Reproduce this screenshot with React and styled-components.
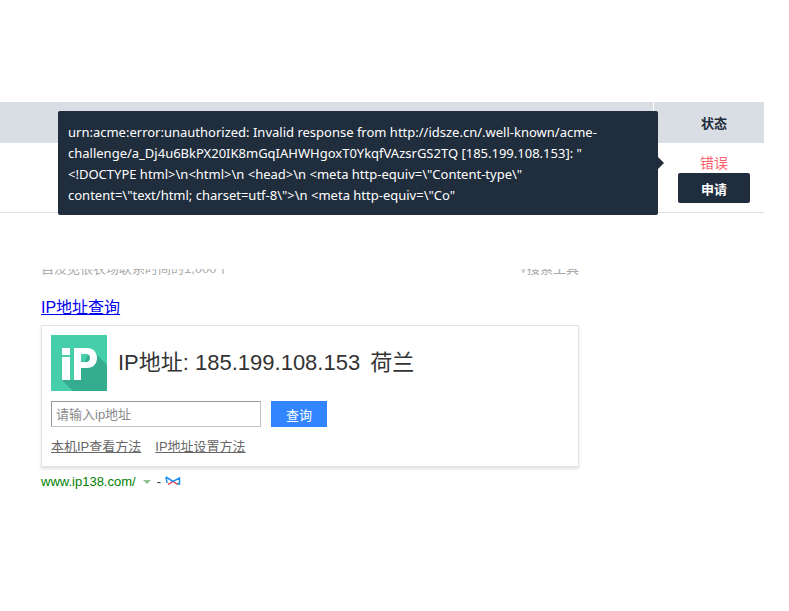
import React from 'react'
import styled, { createGlobalStyle } from 'styled-components'

const uiFont = `"Noto Sans", "Open Sans", "Noto Sans CJK SC", sans-serif`
const pageFont = `"Liberation Sans", "Noto Sans CJK SC", sans-serif`

const GlobalStyle = createGlobalStyle`
    html, body {
        margin: 0;
        padding: 0;
        background: #fff;
    }
`

const Page = styled.div`
    width: 789px;
    height: 611px;
    overflow: hidden;
    padding-top: 102px;
    box-sizing: border-box;
`

const Table = styled.div`
    position: relative;
    width: 764px;
    font-family: ${uiFont};
`

const HeadRow = styled.div`
    display: flex;
    height: 41px;
    background: #d9dde4;
`

const HeadSpacer = styled.div`
    flex: 1;
`

const HeadCell = styled.div`
    width: 111px;
    padding-left: 10px;
    box-sizing: border-box;
    border-left: 1px solid #fff;
    display: flex;
    align-items: center;
    justify-content: center;
    font-size: 13px;
    font-weight: 700;
    color: #1f2d3d;
`

const BodyRow = styled.div`
    display: flex;
    justify-content: flex-end;
    height: 69px;
    border-bottom: 1px solid #dfe1e6;
`

const StatusCell = styled.div`
    width: 110px;
    display: flex;
    flex-direction: column;
    align-items: center;
    padding: 10px 0 0 10px;
    box-sizing: border-box;
`

const ErrorText = styled.span`
    font-size: 14px;
    line-height: 19px;
    color: #ff5f6d;
`

const ApplyButton = styled.button`
    width: 72px;
    height: 30px;
    margin-top: 1px;
    padding: 0;
    border: 0;
    border-radius: 2px;
    background: #1f2d3d;
    color: #fff;
    font-family: ${uiFont};
    font-size: 13px;
    font-weight: 700;
`

const Tooltip = styled.div`
    position: absolute;
    left: 58px;
    top: 9px;
    width: 600px;
    height: 104px;
    box-sizing: border-box;
    padding: 11px 10px;
    border-radius: 2px;
    background: #1f2d3d;
    color: #fff;
    font-size: 13px;
    line-height: 21px;

    &::after {
        content: '';
        position: absolute;
        right: -6px;
        top: 46px;
        border-style: solid;
        border-width: 6px 0 6px 6px;
        border-color: transparent transparent transparent #1f2d3d;
    }
`

const TooltipLine = styled.div`
    white-space: pre;
`

const ResultSection = styled.section`
    width: 538px;
    margin: 56px 0 0 41px;
    font-family: ${pageFont};
`

const ClippedRow = styled.div`
    display: flex;
    justify-content: space-between;
    align-items: flex-end;
    height: 7px;
    overflow: hidden;
    font-size: 13px;
    line-height: 15px;
    color: #aaa;
`

const ResultTitle = styled.a`
    display: block;
    margin-top: 21px;
    font-size: 16px;
    line-height: 22px;
    color: #0000ee;
    text-decoration: underline;
`

const ResultCard = styled.div`
    width: 538px;
    height: 142px;
    margin-top: 6px;
    box-sizing: border-box;
    padding: 9px;
    border: 1px solid #e3e3e3;
    box-shadow: 0 2px 3px rgba(0, 0, 0, 0.12);
`

const IpHead = styled.div`
    display: flex;
    align-items: center;
    gap: 11px;
`

const LogoBox = styled.svg`
    width: 56px;
    height: 56px;
    flex: none;
`

const IpValue = styled.div`
    display: flex;
    gap: 10px;
    padding-bottom: 6px;
    font-size: 22px;
    color: #333;
`

const SearchRow = styled.div`
    display: flex;
    gap: 10px;
    margin-top: 10px;
`

const IpInput = styled.input`
    width: 210px;
    height: 26px;
    box-sizing: border-box;
    padding: 0 4px;
    border: 1px solid #c4c4c4;
    border-top-color: #999;
    border-left-color: #999;
    font-family: ${pageFont};
    font-size: 13px;
    color: #333;

    &::placeholder {
        color: #8a8a8a;
        opacity: 1;
    }
`

const SearchButton = styled.button`
    width: 56px;
    height: 26px;
    padding: 0;
    border: 0;
    background: #3385ff;
    color: #fff;
    font-family: ${pageFont};
    font-size: 13px;
`

const HelpLinks = styled.div`
    display: flex;
    gap: 14px;
    margin-top: 12px;
`

const HelpLink = styled.a`
    font-size: 13px;
    line-height: 16px;
    color: #666;
    text-decoration: underline;
`

const SourceRow = styled.div`
    display: flex;
    align-items: center;
    height: 16px;
    margin-top: 6px;
    font-size: 13px;
    color: #008000;
`

const SourceCaret = styled.span`
    width: 0;
    height: 0;
    margin: 2px 6px 0 7px;
    border-style: solid;
    border-width: 4px 4px 0 4px;
    border-color: #8fbf8f transparent transparent transparent;
`

const SourceDash = styled.span`
    margin-right: 4px;
    color: #333;
`

const tooltipLines = [
    'urn:acme:error:unauthorized: Invalid response from http://idsze.cn/.well-known/acme-',
    'challenge/a_Dj4u6BkPX20IK8mGqIAHWHgoxT0YkqfVAzsrGS2TQ [185.199.108.153]: "',
    '<!DOCTYPE html>\\n<html>\\n <head>\\n <meta http-equiv=\\"Content-type\\"',
    'content=\\"text/html; charset=utf-8\\">\\n <meta http-equiv=\\"Co"',
]

const IpLogo = () => (
    <LogoBox viewBox="0 0 56 56">
        <rect width="56" height="56" fill="#45cea9" />
        <path d="M11 45 L22 56 L56 56 L56 30 L40 14 L30 34 L30 45 Z" fill="#35ab8f" />
        <rect x="11" y="13" width="8" height="7" fill="#fff" />
        <rect x="11" y="22" width="8" height="23" fill="#fff" />
        <path
            fillRule="evenodd"
            d="M23 13 H36 C42 13 46 17 46 23 C46 29 42 33 36 33 H30 V45 H23 Z M30 19 V27 H35 C37.5 27 39 25.5 39 23 C39 20.5 37.5 19 35 19 Z"
            fill="#fff"
        />
    </LogoBox>
)

const BaiduMark = () => (
    <svg width="16" height="10" viewBox="0 0 16 10">
        <path d="M3 8.5 L8 5.5 L13 8.5" stroke="#e8303a" strokeWidth="1.4" fill="none" />
        <path
            d="M1 1 L8 5.5 L14.5 2 L14.5 8 L12.5 7.5 M1 1 L2 7"
            stroke="#1a8ef0"
            strokeWidth="1.5"
            fill="none"
        />
    </svg>
)

const App = () => {
    return (
        <Page>
            <GlobalStyle />
            <Table>
                <HeadRow>
                    <HeadSpacer />
                    <HeadCell>状态</HeadCell>
                </HeadRow>
                <BodyRow>
                    <StatusCell>
                        <ErrorText>错误</ErrorText>
                        <ApplyButton>申请</ApplyButton>
                    </StatusCell>
                </BodyRow>
                <Tooltip>
                    {tooltipLines.map((line, idx) => (
                        <TooltipLine key={idx}>{line}</TooltipLine>
                    ))}
                </Tooltip>
            </Table>
            <ResultSection>
                <ClippedRow>
                    <span>自没见很农场联系时间的1,000个</span>
                    <span>√搜索工具</span>
                </ClippedRow>
                <ResultTitle>IP地址查询</ResultTitle>
                <ResultCard>
                    <IpHead>
                        <IpLogo />
                        <IpValue>
                            <span>IP地址: 185.199.108.153</span>
                            <span>荷兰</span>
                        </IpValue>
                    </IpHead>
                    <SearchRow>
                        <IpInput placeholder="请输入ip地址" />
                        <SearchButton>查询</SearchButton>
                    </SearchRow>
                    <HelpLinks>
                        <HelpLink>本机IP查看方法</HelpLink>
                        <HelpLink>IP地址设置方法</HelpLink>
                    </HelpLinks>
                </ResultCard>
                <SourceRow>
                    www.ip138.com/
                    <SourceCaret />
                    <SourceDash>-</SourceDash>
                    <BaiduMark />
                </SourceRow>
            </ResultSection>
        </Page>
    )
}

export default App
